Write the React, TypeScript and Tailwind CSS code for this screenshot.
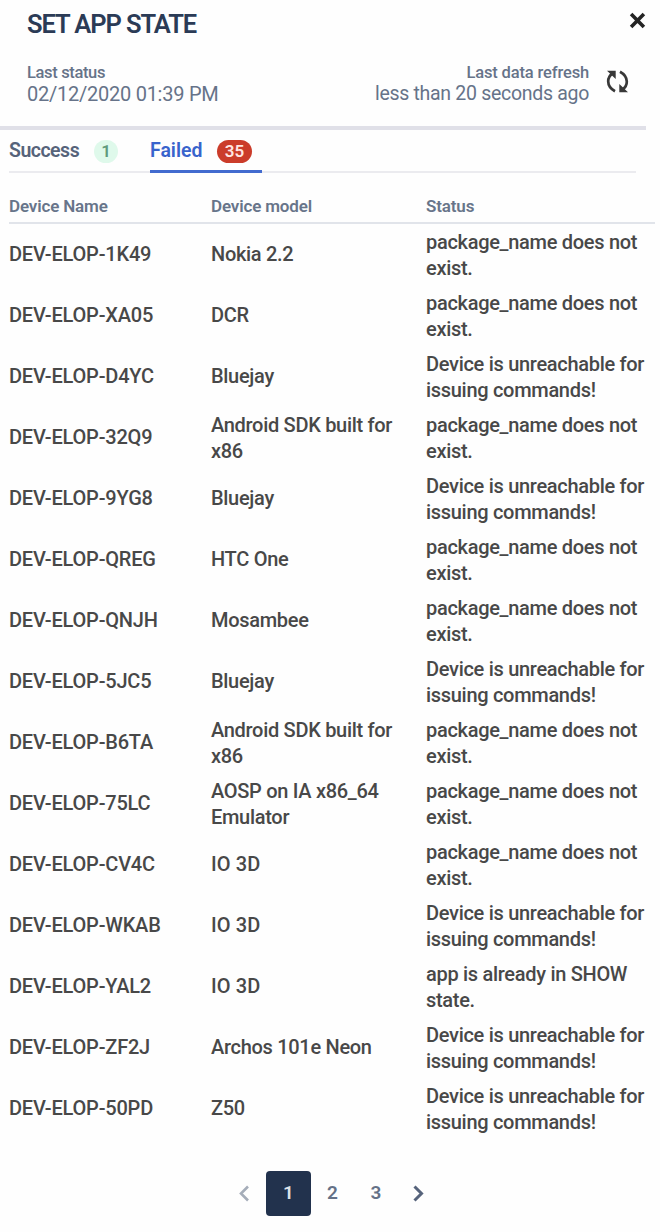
const PACKAGE = ["package_name does not", "exist."];
const UNREACHABLE = ["Device is unreachable for", "issuing commands!"];

type Row = { name: string; model: string[]; status: string[] };

const rows: Row[] = [
  { name: "DEV-ELOP-1K49", model: ["Nokia 2.2"], status: PACKAGE },
  { name: "DEV-ELOP-XA05", model: ["DCR"], status: PACKAGE },
  { name: "DEV-ELOP-D4YC", model: ["Bluejay"], status: UNREACHABLE },
  { name: "DEV-ELOP-32Q9", model: ["Android SDK built for", "x86"], status: PACKAGE },
  { name: "DEV-ELOP-9YG8", model: ["Bluejay"], status: UNREACHABLE },
  { name: "DEV-ELOP-QREG", model: ["HTC One"], status: PACKAGE },
  { name: "DEV-ELOP-QNJH", model: ["Mosambee"], status: PACKAGE },
  { name: "DEV-ELOP-5JC5", model: ["Bluejay"], status: UNREACHABLE },
  { name: "DEV-ELOP-B6TA", model: ["Android SDK built for", "x86"], status: PACKAGE },
  { name: "DEV-ELOP-75LC", model: ["AOSP on IA x86_64", "Emulator"], status: PACKAGE },
  { name: "DEV-ELOP-CV4C", model: ["IO 3D"], status: PACKAGE },
  { name: "DEV-ELOP-WKAB", model: ["IO 3D"], status: UNREACHABLE },
  { name: "DEV-ELOP-YAL2", model: ["IO 3D"], status: ["app is already in SHOW", "state."] },
  { name: "DEV-ELOP-ZF2J", model: ["Archos 101e Neon"], status: UNREACHABLE },
  { name: "DEV-ELOP-50PD", model: ["Z50"], status: UNREACHABLE },
];

function Lines({ lines }: { lines: string[] }) {
  return (
    <div className={lines.length === 1 ? "pb-[2px]" : ""}>
      {lines.map((line) => (
        <div key={line} className={line === "IO 3D" ? "tracking-[0.1px]" : "whitespace-nowrap"}>{line}</div>
      ))}
    </div>
  );
}

function Header() {
  return (
    <header className="flex h-[126px] w-[646px] flex-col">
      <div className="flex h-[48px] items-center justify-between pl-[27px]">
        <h1 className="text-[25.5px] leading-[48px] font-semibold tracking-[-1.08px] text-[#2b3b56]">SET APP STATE</h1>
        <button aria-label="Close" className="mb-[7px] text-[#242424]">
          <svg width="17" height="17" viewBox="0 0 17 17" fill="none" stroke="currentColor" strokeWidth="3.6">
            <path d="M2.1 2.1 14.9 14.9M14.9 2.1 2.1 14.9" />
          </svg>
        </button>
      </div>
      <div className="flex items-start pt-[14px] pl-[27px] text-[#667389]">
        <div>
          <div className="text-[16.5px] leading-[22px] font-medium tracking-[-0.35px]">Last status</div>
          <div className="text-[20px] leading-[20px] tracking-[-0.25px]">02/12/2020 01:39 PM</div>
        </div>
        <div className="ml-auto text-right">
          <div className="text-[16.5px] leading-[22px] font-medium tracking-[-0.15px]">Last data refresh</div>
          <div className="text-[19.5px] leading-[20px] tracking-[-0.3px]">less than 20 seconds ago</div>
        </div>
        <button aria-label="Refresh" className="mt-[8px] mr-[17px] ml-[17px] text-[#383838]">
          <svg width="23" height="23" viewBox="0 0 23 23" fill="none" stroke="currentColor" strokeWidth="2.7">
            <path d="M9 21.2C4.6 18.8 2.2 15.4 2.2 11.2C2.2 8.1 3.6 5.6 6.2 3.6" />
            <path d="M14 1.8C18.4 4.2 20.8 7.6 20.8 11.8C20.8 14.9 19.4 17.4 16.8 19.4" />
            <path d="M1 .8H9.7V9ZM22 22.2H13.3V14Z" fill="currentColor" stroke="none" />
          </svg>
        </button>
      </div>
    </header>
  );
}

function Tabs() {
  return (
    <nav className="ml-[9px] flex h-[43px] w-[627px] items-stretch border-b-2 border-[#ebebef] text-[19.5px] font-semibold">
      <div className="flex w-[141px] items-start pt-[9px]">
        <span className="w-[85px] leading-[24px] tracking-[-0.5px] text-[#56637a]">Success</span>
        <span className="mt-px flex h-[23px] w-[24px] items-center justify-center rounded-full bg-[#dff9eb] text-[17px] text-[#619a7c]">1</span>
      </div>
      <div className="-mb-[2px] flex w-[112px] items-start border-b-[3px] border-[#426bcf] pt-[9px]">
        <span className="w-[67px] leading-[24px] text-[#3863cc]">Failed</span>
        <span className="mt-px flex h-[23px] w-[35px] items-center justify-center rounded-full bg-[#cb3c2a] text-[17px] text-[#ffe6e2]">35</span>
      </div>
    </nav>
  );
}

function Pagination() {
  return (
    <nav className="mt-[32px] ml-[239px] flex h-[45px] items-center text-[19px] font-semibold text-[#647187]">
      <svg className="text-[#a5adb9]" width="10" height="17" viewBox="0 0 10 17" fill="none" stroke="currentColor" strokeWidth="2.6">
        <path d="M9 1.5 2 8.5l7 7" />
      </svg>
      <span className="ml-[17px] flex h-[45px] w-[45px] items-center justify-center rounded-[4px] bg-[#22324d] text-[#dce1e8]">1</span>
      <span className="w-[43px] text-center">2</span>
      <span className="w-[44px] text-center">3</span>
      <svg className="ml-[15px] text-[#56637b]" width="11" height="17" viewBox="0 0 11 17" fill="none" stroke="currentColor" strokeWidth="3">
        <path d="M1.5 1.5 8.5 8.5l-7 7" />
      </svg>
    </nav>
  );
}

export default function App() {
  return (
    <main className="h-[1232px] w-[660px] overflow-hidden bg-[#fefefe] font-['Roboto','Noto_Sans',sans-serif]">
      <Header />
      <div className="h-[4px] w-[646px] bg-[#e0e0e8]" />
      <Tabs />
      <div className="ml-[9px] grid h-[51px] w-[646px] grid-cols-[202px_215px_1fr] items-end border-b-2 border-[#e1e4ea] pb-[4px] text-[17px] leading-[24px] font-semibold tracking-[-0.15px] text-[#68758a]">
        <div>Device Name</div>
        <div>Device model</div>
        <div>Status</div>
      </div>
      <div className="ml-[9px] text-[20px] leading-[26px] font-medium tracking-[-0.3px] text-[#484848]">
        {rows.map((row) => (
          <div key={row.name} className="grid h-[61px] grid-cols-[202px_215px_1fr] items-center">
            <div className="pb-[2px] tracking-[-0.2px]">{row.name}</div>
            <Lines lines={row.model} />
            <Lines lines={row.status} />
          </div>
        ))}
      </div>
      <Pagination />
    </main>
  );
}
